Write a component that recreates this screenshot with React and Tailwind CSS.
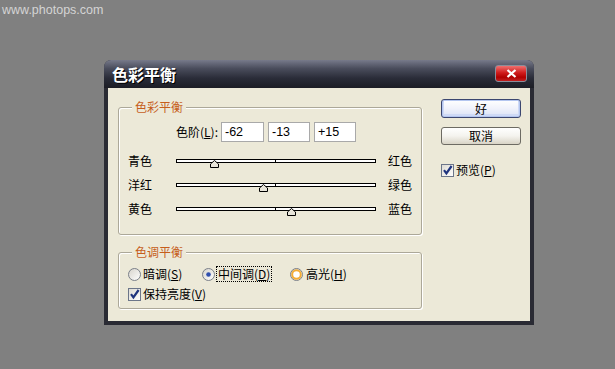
import React from "react";

const cjk = "font-['Noto_Sans_CJK_SC','Liberation_Sans',sans-serif]";

function U({ children }) {
  return <span className="underline underline-offset-[1px]">{children}</span>;
}

function Radio({ state }) {
  return (
    <svg width="13" height="13" viewBox="0 0 13 13" className="shrink-0">
      <defs>
        <linearGradient id={"rg" + state} x1="0" y1="0" x2="1" y2="1">
          <stop offset="0" stopColor="#d6d3cb" />
          <stop offset="1" stopColor="#ffffff" />
        </linearGradient>
      </defs>
      <circle cx="6.5" cy="6.5" r="6" fill={`url(#rg${state})`} stroke="#7a7f88" />
      {state === "checked" && <circle cx="6.5" cy="6.5" r="2.3" fill="#2f4fae" />}
      {state === "hover" && (
        <circle cx="6.5" cy="6.5" r="4.3" fill="#ffffff" stroke="#f4ac34" strokeWidth="2" />
      )}
    </svg>
  );
}

function Check() {
  return (
    <svg width="13" height="13" viewBox="0 0 13 13" className="shrink-0">
      <defs>
        <linearGradient id="cg" x1="0" y1="0" x2="1" y2="1">
          <stop offset="0" stopColor="#dcdad2" />
          <stop offset="1" stopColor="#ffffff" />
        </linearGradient>
      </defs>
      <rect x="0.5" y="0.5" width="12" height="12" fill="url(#cg)" stroke="#6c7689" />
      <path d="M3 6.2 L5.4 9.4 L10.6 2" fill="none" stroke="#1f347e" strokeWidth="2.2" />
    </svg>
  );
}

function Slider({ left, right, value }) {
  const pos = value + 100 - 4.5 - 1;
  return (
    <div className="flex items-center h-[24px]">
      <div className="w-[57px] pl-[9px]">{left}</div>
      <div className="relative w-[200px] h-[4px] border border-black bg-white">
        <div className="absolute left-[98px] top-0 w-[1px] h-[2px] bg-black" />
        <svg
          width="9"
          height="8"
          viewBox="0 0 9 8"
          className="absolute top-[0px]"
          style={{ left: pos }}
        >
          <polygon points="4.5,0.5 8.5,4 8.5,7.5 0.5,7.5 0.5,4" fill="#e8e5da" stroke="#000" />
        </svg>
      </div>
      <div className="ml-[12px]">{right}</div>
    </div>
  );
}

function Group({ title, className, children }) {
  return (
    <div
      className={
        "relative w-[304px] border border-[#aca899] rounded-[3px] shadow-[inset_1px_1px_0_#fff,1px_1px_0_#fff] " +
        className
      }
    >
      <span className="absolute left-[13px] top-[-8px] px-[3px] bg-[#ece9d8] text-[#c65e1c] leading-[14px]">
        {title}
      </span>
      {children}
    </div>
  );
}

export default function App() {
  return (
    <div className="relative w-[615px] h-[369px] bg-[#808080] overflow-hidden">
      <div className="pl-[2px] pt-[3px] text-[12.5px] leading-[14px] text-[#d4d4d4] font-['Liberation_Sans',sans-serif]">
        www.photops.com
      </div>

      <div
        className={
          "absolute left-[104px] top-[60px] w-[430px] h-[265px] rounded-t-[7px] bg-[#2a2b34] flex flex-col text-[12px] leading-[14px] text-black " +
          cjk
        }
      >
        <div className="h-[28px] shrink-0 rounded-t-[7px] bg-[linear-gradient(to_bottom,#777a8a,#4a4d5c_30%,#2a2c38_65%,#1c1d25)] flex items-center pl-[8px] pr-[7px]">
          <span className="text-white text-[16px] font-bold leading-[18px] [text-shadow:1px_1px_0_#000]">
            色彩平衡
          </span>
          <div className="ml-auto mt-[-2px] w-[32px] h-[17px] rounded-[3px] border border-[#8a8d9a] bg-[linear-gradient(to_bottom,#f07070,#d01c1c_45%,#b00000_75%,#c02020)] flex items-center justify-center">
            <svg width="11" height="9" viewBox="0 0 11 9">
              <path d="M1.5 1 L9.5 8 M9.5 1 L1.5 8" stroke="#fff" strokeWidth="2.2" />
            </svg>
          </div>
        </div>

        <div className="flex-1 mx-[4px] mb-[4px] bg-[#ece9d8] flex">
          <div className="pl-[10px] pt-[19px] flex flex-col">
            <Group title="色彩平衡" className="h-[128px]">
              <div className="mt-[14px] flex items-center h-[20px]">
                <div className="w-[99px] text-right">
                  色阶(<U>L</U>):
                </div>
                <div className="ml-[3px] flex gap-[4px]">
                  {[
                    ["-62", "w-[43px]"],
                    ["-13", "w-[42px]"],
                    ["+15", "w-[42px]"],
                  ].map(([v, w]) => (
                    <div
                      key={v}
                      className={
                        w +
                        " h-[20px] bg-white border border-[#a9a9a9] pl-[3px] flex items-center text-[12.5px] font-['Liberation_Sans',sans-serif]"
                      }
                    >
                      {v}
                    </div>
                  ))}
                </div>
              </div>
              <div className="mt-[7px] flex flex-col">
                <Slider left="青色" right="红色" value={-62} />
                <Slider left="洋红" right="绿色" value={-13} />
                <Slider left="黄色" right="蓝色" value={15} />
              </div>
            </Group>

            <Group title="色调平衡" className="h-[57px] mt-[17px]">
              <div className="mt-[13px] pl-[9px] flex items-center h-[16px]">
                <div className="w-[74px] flex items-center gap-[2px]">
                  <Radio state="off" />
                  <span>
                    暗调(<U>S</U>)
                  </span>
                </div>
                <div className="w-[88px] flex items-center gap-[1px]">
                  <Radio state="checked" />
                  <span className="border border-dotted border-black px-[1px]">
                    中间调(<U>D</U>)
                  </span>
                </div>
                <div className="flex items-center gap-[3px]">
                  <Radio state="hover" />
                  <span>
                    高光(<U>H</U>)
                  </span>
                </div>
              </div>
              <div className="mt-[4px] pl-[9px] flex items-center h-[16px] gap-[2px]">
                <Check />
                <span>
                  保持亮度(<U>V</U>)
                </span>
              </div>
            </Group>
          </div>

          <div className="ml-[19px] pt-[11px] w-[80px] flex flex-col">
            <div className="h-[19px] rounded-[3px] border border-[#3c4770] bg-[linear-gradient(to_bottom,#ffffff,#f0f2fb_50%,#d9e1f6)] shadow-[inset_0_0_0_1px_#b4c6f0,inset_0_-1px_0_2px_#cfdaf6] flex items-center justify-center">
              好
            </div>
            <div className="mt-[9px] h-[18px] rounded-[3px] border border-[#6d6b63] bg-[linear-gradient(to_bottom,#ffffff,#f4f3ee_50%,#d8d4c6)] flex items-center justify-center">
              取消
            </div>
            <div className="mt-[18px] flex items-center h-[14px] gap-[2px]">
              <Check />
              <span>
                预览(<U>P</U>)
              </span>
            </div>
          </div>
        </div>
      </div>
    </div>
  );
}
